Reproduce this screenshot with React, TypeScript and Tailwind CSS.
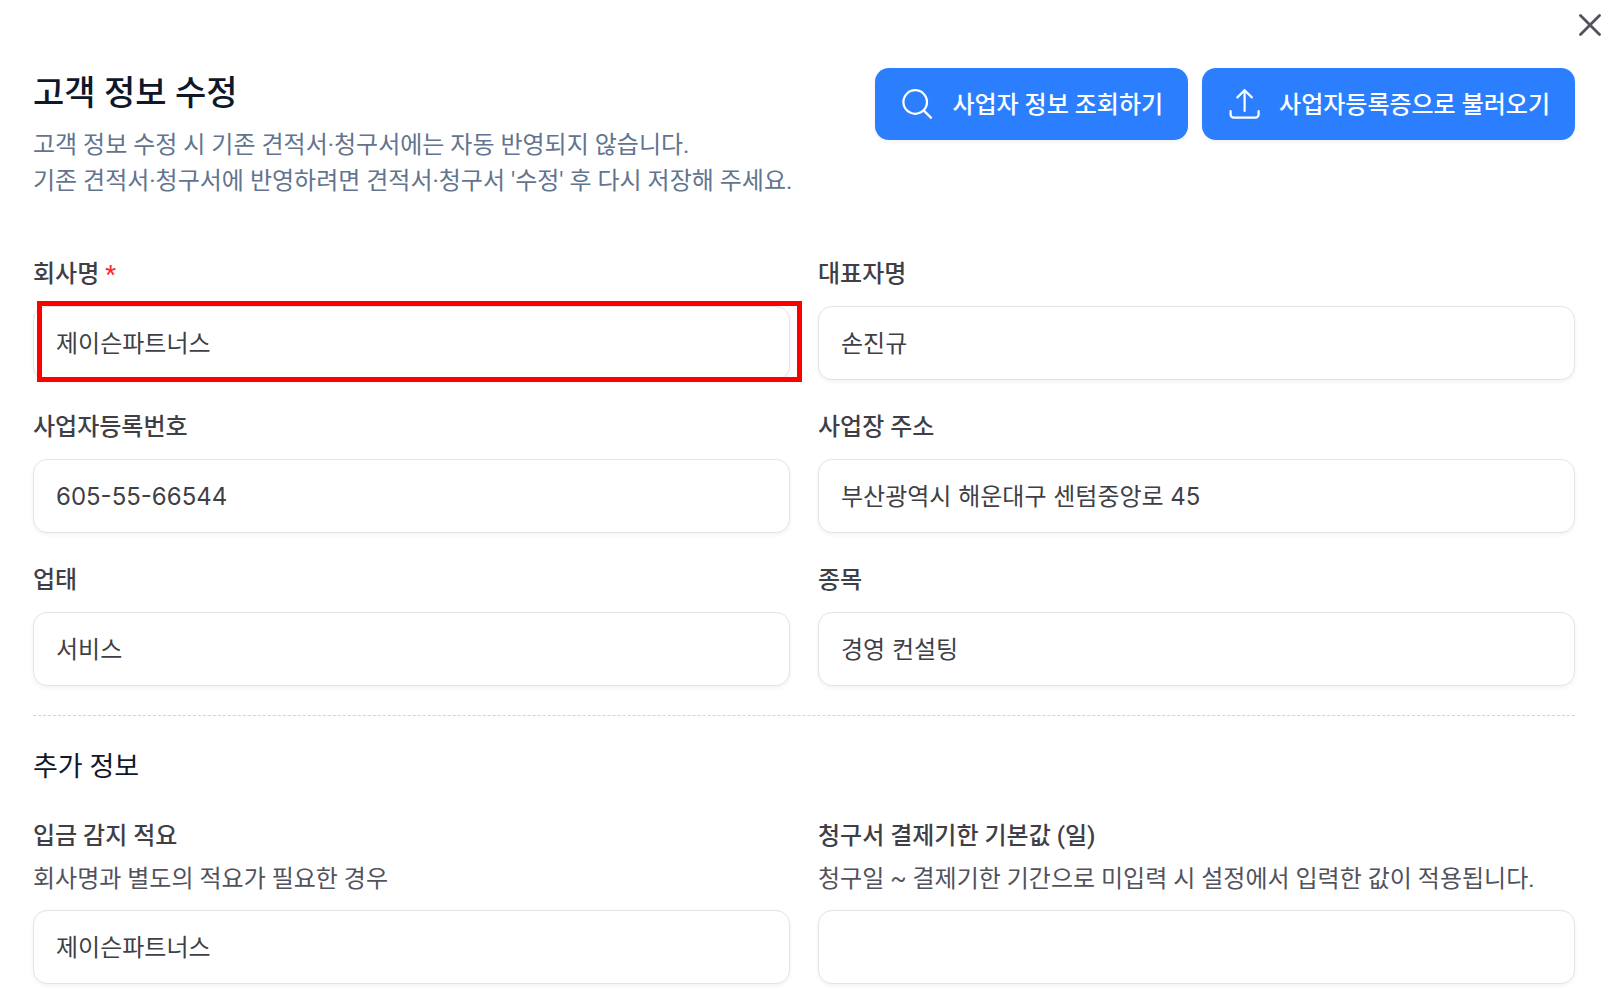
import type { ReactNode } from "react";

type FieldProps = {
  id: string;
  label: string;
  value?: string;
  required?: boolean;
  hint?: string;
  highlighted?: boolean;
};

const Field = ({ id, label, value = "", required, hint, highlighted }: FieldProps) => (
  <div className="flex min-w-0 flex-col">
    <label htmlFor={id} className="text-2xl leading-9 font-medium text-zinc-700">
      {label}
      {required && <span className="text-[#fb2c36]"> *</span>}
    </label>
    {hint && (
      <p id={`${id}-hint`} className="mt-[7px] text-2xl leading-9 text-zinc-600">
        {hint}
      </p>
    )}
    <div className={hint ? "relative mt-[13px]" : "relative mt-[14px]"}>
      <input
        id={id}
        type="text"
        defaultValue={value}
        aria-describedby={hint ? `${id}-hint` : undefined}
        className="block w-full rounded-[14px] border border-zinc-200 bg-white px-[22px] pt-[19px] pb-[17px] font-['Inter','Noto_Sans_CJK_KR',sans-serif] text-2xl leading-9 text-zinc-700 shadow-[0_2px_4px_rgba(0,0,0,0.05)] outline-none"
      />
      {highlighted && (
        <div className="pointer-events-none absolute -top-[5px] -right-3 -bottom-0.5 left-1 border-5 border-[#ff0000]" />
      )}
    </div>
  </div>
);

const ActionButton = ({ icon, children }: { icon: ReactNode; children: ReactNode }) => (
  <button
    type="button"
    className="flex h-[72px] items-center gap-[18px] rounded-[14px] bg-[#2b7fff] px-[25px] pt-0.5 text-2xl font-medium whitespace-nowrap text-white shadow-[0_2px_4px_rgba(0,0,0,0.05)]"
  >
    {icon}
    {children}
  </button>
);

const SearchIcon = () => (
  <svg width="34" height="34" viewBox="0 0 34 34" fill="none" stroke="currentColor" strokeWidth="2.2" aria-hidden="true">
    <circle cx="15.2" cy="14" r="11.8" />
    <path d="M23.6 22.4L31.6 30.4" />
  </svg>
);

const UploadIcon = () => (
  <svg
    width="34"
    height="34"
    viewBox="0 0 34 34"
    fill="none"
    stroke="currentColor"
    strokeWidth="2.2"
    strokeLinecap="round"
    strokeLinejoin="round"
    aria-hidden="true"
  >
    <path d="M17.6 23V2.2M10.4 9.4L17.6 2.2L24.8 9.4" />
    <path d="M3.6 23V26.4a3.2 3.2 0 0 0 3.2 3.2h21.6a3.2 3.2 0 0 0 3.2-3.2V23" />
  </svg>
);

const App = () => {
  return (
    <main className="min-h-screen overflow-hidden bg-white font-['Roboto','Noto_Sans_CJK_KR',sans-serif]">
      <div className="flex h-[68px] justify-end pt-3">
        <button type="button" aria-label="닫기" className="h-[26px] w-6 text-[#52525c]">
          <svg width="24" height="26" viewBox="0 0 24 26" fill="none" stroke="currentColor" strokeWidth="2.8" strokeLinecap="round">
            <path d="M3.5 3.5L22.5 22.5M22.5 3.5L3.5 22.5" />
          </svg>
        </button>
      </div>

      <form className="pr-[26px] pb-[14px] pl-[33px]">
        {/* Header */}
        <header className="flex items-start justify-between">
          <div>
            <h1 className="text-[34px] leading-[50px] font-medium text-slate-900">고객 정보 수정</h1>
            <p className="mt-[9px] text-2xl leading-9 text-[#62748e]">
              고객 정보 수정 시 기존 견적서·청구서에는 자동 반영되지 않습니다.
              <br />
              기존 견적서·청구서에 반영하려면 견적서·청구서 '수정' 후 다시 저장해 주세요.
            </p>
          </div>
          <div className="flex gap-[14px]">
            <ActionButton icon={<SearchIcon />}>사업자 정보 조회하기</ActionButton>
            <ActionButton icon={<UploadIcon />}>사업자등록증으로 불러오기</ActionButton>
          </div>
        </header>

        {/* Business info */}
        <section className="mt-[57px] grid grid-cols-2 gap-x-7 gap-y-[29px]">
          <Field id="company" label="회사명" value="제이슨파트너스" required highlighted />
          <Field id="ceo" label="대표자명" value="손진규" />
          <Field id="biz-number" label="사업자등록번호" value="605-55-66544" />
          <Field id="address" label="사업장 주소" value="부산광역시 해운대구 센텀중앙로 45" />
          <Field id="biz-type" label="업태" value="서비스" />
          <Field id="biz-item" label="종목" value="경영 컨설팅" />
        </section>

        <hr className="mt-[29px] border-t border-dashed border-zinc-300" />

        {/* Additional info */}
        <h2 className="mt-[30px] text-[27px] leading-[42px] text-slate-900">추가 정보</h2>
        <section className="mt-[30px] grid grid-cols-2 gap-x-7 gap-y-[29px]">
          <Field id="deposit-memo" label="입금 감지 적요" value="제이슨파트너스" hint="회사명과 별도의 적요가 필요한 경우" />
          <Field
            id="due-days"
            label="청구서 결제기한 기본값 (일)"
            hint="청구일 ~ 결제기한 기간으로 미입력 시 설정에서 입력한 값이 적용됩니다."
          />
        </section>
      </form>
    </main>
  );
};

export default App;
